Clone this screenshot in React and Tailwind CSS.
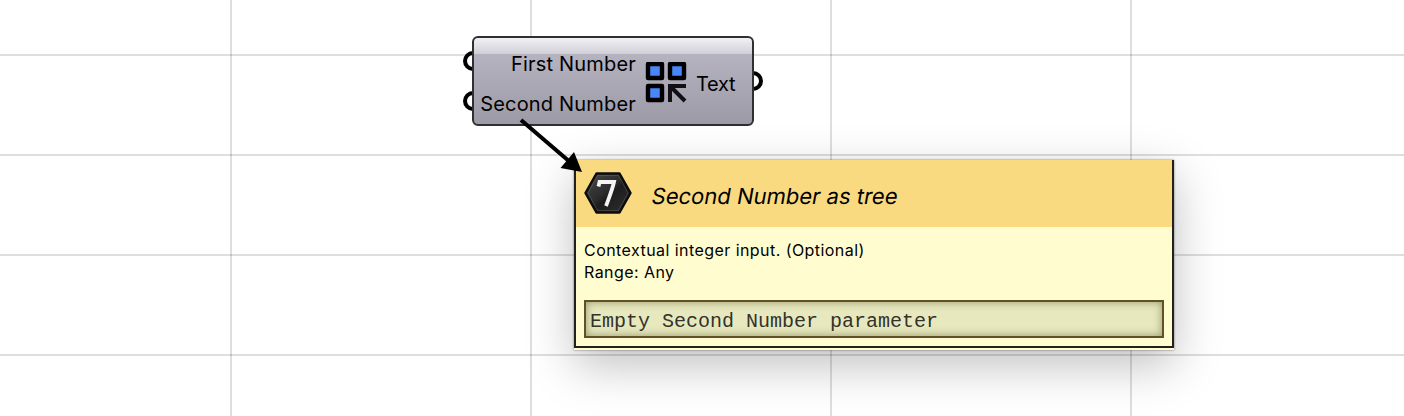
const COLUMNS = [230, 530, 830, 1130];
const ROWS = [54, 154, 254, 354];

function CanvasGrid() {
  return (
    <svg className="absolute inset-0" width="1404" height="416">
      {COLUMNS.map((x) => (
        <rect key={x} x={x} y="0" width="2" height="416" fill="#000" fillOpacity="0.13" />
      ))}
      {ROWS.map((y) => (
        <rect key={y} x="0" y={y} width="1404" height="2" fill="#000" fillOpacity="0.13" />
      ))}
    </svg>
  );
}

function Grip({ className }) {
  return <span className={`absolute size-[20px] rounded-full border-4 border-black bg-white ${className}`} />;
}

function TreeIcon() {
  return (
    <svg width="42" height="42" viewBox="0 0 42 42">
      <g fill="#4787f7" stroke="#000" strokeWidth="4.4" strokeLinejoin="round">
        <rect x="3" y="2" width="14" height="14" />
        <rect x="25" y="2" width="14" height="14" />
        <rect x="3" y="24" width="14" height="14" />
      </g>
      <path d="M25 40V24H41M25.5 24.5L40 39" fill="none" stroke="#111114" strokeWidth="4" />
    </svg>
  );
}

function IntegerIcon() {
  return (
    <svg width="48" height="44" viewBox="0 0 48 44">
      <defs>
        <linearGradient id="hex" x1="0" y1="0" x2="1" y2="1">
          <stop offset="0" stopColor="#484848" />
          <stop offset="0.45" stopColor="#2c2c2c" />
          <stop offset="0.55" stopColor="#1d1d1d" />
          <stop offset="1" stopColor="#303030" />
        </linearGradient>
      </defs>
      <path d="M12.5 1.5H35.5L46.5 21L35.5 40.5H12.5L1.5 21Z" fill="url(#hex)" stroke="#0c0c0c" strokeWidth="2.5" strokeLinejoin="round" />
      <path d="M13.5 3.5H34.5L44 21L34.5 38.5H13.5L4 21Z" fill="none" stroke="#999" strokeOpacity="0.25" strokeWidth="1" />
      <path d="M14.5 14.5L15.5 10H30C28.5 17 25 26 22 34" fill="none" stroke="#f4f4f4" strokeWidth="3.8" />
    </svg>
  );
}

function Component() {
  return (
    <div className="absolute left-[472px] top-[36px] h-[90px] w-[282px]">
      <Grip className="left-[-9px] top-[15px]" />
      <Grip className="left-[-9px] top-[55px]" />
      <Grip className="right-[-9px] top-[35px]" />
      <div className="relative flex h-full items-start rounded-[6px] border-2 border-[#303032] bg-[linear-gradient(to_bottom,#f2f1f5_0px,#d0cfd6_16px,#b4b3bf_16px,#9b9aa6_100%)] text-[20px] leading-[40px] text-black">
        <div className="flex w-[162px] flex-col items-end whitespace-nowrap pt-[6px] tracking-[0.18px]">
          <span>First Number</span>
          <span>Second Number</span>
        </div>
        <div className="ml-[9px] mt-[24px]">
          <TreeIcon />
        </div>
        <span className="ml-[9px] pt-[26px] tracking-[-0.3px]">Text</span>
      </div>
    </div>
  );
}

function Tooltip() {
  return (
    <div className="absolute left-[574px] top-[160px] flex h-[190px] w-[600px] flex-col bg-[#fffdd0] pb-[2px] shadow-[0_0_2px_rgba(0,0,0,0.5),0_15px_44px_rgba(0,0,0,0.25)]">
      <div className="flex flex-1 flex-col border-x-2 border-b-2 border-[#22211d]">
        <div className="flex h-[67px] items-center bg-[#fada80] pl-[8px]">
          <IntegerIcon />
          <h1 className="ml-[20px] mt-[4px] -skew-x-[10deg] text-[22px] leading-[28px] text-black">Second Number as tree</h1>
        </div>
        <div className="px-[8px] pt-[12px] text-[16px] leading-[22px] tracking-[0.44px] text-black">
          <p>Contextual integer input. (Optional)</p>
          <p>Range: Any</p>
        </div>
        <div className="mx-[8px] mt-[17px] h-[38px] border-2 border-[#625128] bg-[#e8e8bf] pl-[4px] pt-[5px] font-['Liberation_Mono',monospace] text-[20px] leading-[30px] text-[#33332a] shadow-[inset_0_0_9px_rgba(70,70,20,0.5)]">
          Empty Second Number parameter
        </div>
      </div>
    </div>
  );
}

function PointerArrow() {
  return (
    <svg className="absolute inset-0" width="1404" height="416">
      <path d="M521 120L570 162" stroke="#000" strokeWidth="4" />
      <path d="M582 172L560.5 168L574 152Z" fill="#000" />
    </svg>
  );
}

export default function App() {
  return (
    <main className="relative h-[416px] w-[1404px] overflow-hidden bg-white font-[Inter,sans-serif]">
      <CanvasGrid />
      <Component />
      <Tooltip />
      <PointerArrow />
    </main>
  );
}
